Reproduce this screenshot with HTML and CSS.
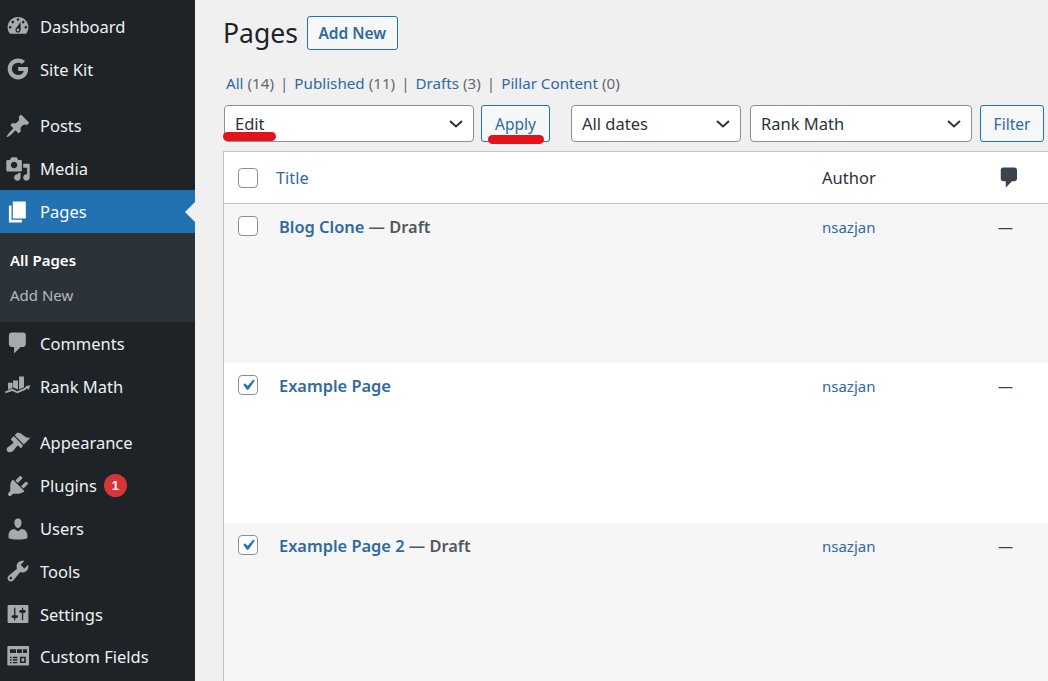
FILE: index.html
```html
<!DOCTYPE html>
<html lang="en">
<head>
  <meta charset="UTF-8">
  <title>Pages</title>
  <link rel="stylesheet" href="styles.css">
</head>
<body>
  <div class="admin">
    <nav class="sidebar">
      <ul class="menu">
        <li class="menu-item"><svg class="icon" viewBox="0 0 20 20"><path d="M3.76 16h12.48c1.1-1.37 1.76-3.11 1.76-5 0-4.42-3.58-8-8-8s-8 3.58-8 8c0 1.89.66 3.63 1.76 5zM10 4c.55 0 1 .45 1 1s-.45 1-1 1-1-.45-1-1 .45-1 1-1zM6 6c.55 0 1 .45 1 1s-.45 1-1 1-1-.45-1-1 .45-1 1-1zm8 0c.55 0 1 .45 1 1s-.45 1-1 1-1-.45-1-1 .45-1 1-1zm-5.37 5.55L12 7v6c0 1.1-.9 2-2 2s-2-.9-2-2c0-.57.24-1.08.63-1.45zM4 10c.55 0 1 .45 1 1s-.45 1-1 1-1-.45-1-1 .45-1 1-1zm12 0c.55 0 1 .45 1 1s-.45 1-1 1-1-.45-1-1 .45-1 1-1zm-5 3c0-.55-.45-1-1-1s-1 .45-1 1 .45 1 1 1 1-.45 1-1z"/></svg>Dashboard</li>
        <li class="menu-item"><svg class="icon" viewBox="0 0 20 20"><path d="M17.6 8.5h-7.5v3.1h4.300c-.4 2-2.100 3.100-4.300 3.100-2.600 0-4.800-2.200-4.800-4.800s2.200-4.800 4.800-4.800c1.200 0 2.200.4 3 1.100l2.300-2.300C14 2.700 12.200 2 10.100 2 5.700 2 2.100 5.600 2.100 10s3.600 8 8 8c4 0 7.700-2.900 7.700-8 0-.5-.1-1-.2-1.500z"/></svg>Site Kit</li>
        <li class="menu-sep"></li>
        <li class="menu-item"><svg class="icon" viewBox="0 0 20 20"><path d="M10.44 3.02l1.82-1.82 6.36 6.35-1.83 1.82c-1.05-.68-2.48-.57-3.41.36l-.75.75c-.92.93-1.04 2.35-.35 3.41l-1.83 1.82-2.41-2.41-2.8 2.79c-.42.42-3.38 2.71-3.8 2.29s1.86-3.39 2.28-3.81l2.79-2.79L4.1 9.36l1.83-1.82c1.05.69 2.48.57 3.4-.36l.75-.75c.93-.92 1.05-2.35.36-3.41z"/></svg>Posts</li>
        <li class="menu-item"><svg class="icon" viewBox="0 0 20 20"><path d="M13 11V4c0-.55-.45-1-1-1h-1.67L9 1H5L3.67 3H2c-.55 0-1 .45-1 1v7c0 .55.45 1 1 1h10c.55 0 1-.45 1-1zM7 4.500c1.380 0 2.500 1.120 2.500 2.500S8.380 9.500 7 9.500 4.500 8.380 4.500 7 5.620 4.500 7 4.500zM14 6h5v10.500c0 1.380-1.120 2.500-2.500 2.500S14 17.880 14 16.500s1.120-2.500 2.500-2.500c.17 0 .34.02.5.05V9h-3V6zm-4 8.050V13h2v3.500c0 1.380-1.120 2.500-2.500 2.500S7 17.880 7 16.500 8.120 14 9.500 14c.17 0 .34.02.5.05z"/></svg>Media</li>
        <li class="menu-item current"><svg class="icon" viewBox="0 0 20 20"><path d="M6 15V2h10v13H6zm-1 1h8v2H3V5h2v11z"/></svg>Pages</li>
        <li class="submenu">
          <div class="submenu-item active">All Pages</div>
          <div class="submenu-item">Add New</div>
        </li>
        <li class="menu-item"><svg class="icon" viewBox="0 0 20 20"><path d="M5 2h9c1.100 0 2 .9 2 2v7c0 1.100-.9 2-2 2h-2l-5 5v-5H5c-1.100 0-2-.9-2-2V4c0-1.100.9-2 2-2z"/></svg>Comments</li>
        <li class="menu-item"><svg class="icon" viewBox="0 0 20 20"><path d="M2.300 7.500h3.500v4l-3.500 1.300zM6.200 5.800H10v6.900l-3.800-1.600zM10.800 2.700h3.800v8.200l-3.800 1.700zM0 14.300l5.500-2.100 4 1.800 5.500-2.500 1.500-1.500 3-.5-1.500 3.500-1-1.200-1.500 1.200-6 2.600-4-1.800-5 1.700z"/></svg>Rank Math</li>
        <li class="menu-sep"></li>
        <li class="menu-item"><svg class="icon" viewBox="0 0 20 20"><path d="M14.480 11.060L7.410 3.990l1.500-1.500c.5-.56 2.300-.47 3.510.32 1.210.8 1.430 1.280 2.910 2.100 1.180.64 2.450 1.260 4.450.85zm-.71.71L6.700 4.700 4.930 6.470c-.39.39-.39 1.020 0 1.410l1.060 1.060c.39.39.39 1.030 0 1.420-.6.6-1.430 1.110-2.210 1.690-.35.26-.7.53-1.010.84C1.430 13.230.78 15.370 1.950 16.540c1.170 1.170 3.300.52 4.660-.84.31-.31.58-.66.84-1.010.58-.78 1.090-1.610 1.690-2.210.39-.39 1.020-.39 1.410 0l1.060 1.060c.39.39 1.020.39 1.410 0z"/></svg>Appearance</li>
        <li class="menu-item"><svg class="icon" viewBox="0 0 20 20"><path d="M13.110 4.360L9.870 7.600 8 5.730l3.240-3.240c.35-.34 1.050-.2 1.560.32.52.51.66 1.210.31 1.550zm-8 1.770l.91-1.120 9.010 9.010-1.190.84c-.71.71-2.630 1.160-3.820 1.160H6.140L4.900 17.260c-.59.59-1.540.59-2.120 0-.59-.58-.59-1.530 0-2.120l1.240-1.240v-3.880c0-1.130.4-3.190 1.090-3.890zm7.260 3.970l3.240-3.240c.34-.35 1.040-.21 1.550.31.52.51.66 1.210.31 1.550l-3.240 3.250z"/></svg>Plugins<span class="badge">1</span></li>
        <li class="menu-item"><svg class="icon" viewBox="0 0 20 20"><path d="M10 9.250c-2.270 0-2.730-3.440-2.730-3.440C7 4.020 7.820 2 9.970 2c2.160 0 2.980 2.020 2.710 3.810 0 0-.41 3.440-2.680 3.440zm0 2.570L12.720 10c2.390 0 4.520 2.330 4.520 4.530v2.490s-3.650 1.130-7.240 1.130c-3.650 0-7.240-1.130-7.240-1.130v-2.490c0-2.250 1.940-4.480 4.470-4.480z"/></svg>Users</li>
        <li class="menu-item"><svg class="icon" viewBox="0 0 20 20"><path d="M16.680 9.770c-1.340 1.340-3.300 1.670-4.950.99l-5.410 6.520c-.99.99-2.590.99-3.580 0s-.99-2.590 0-3.570l6.520-5.420c-.68-1.650-.35-3.610.99-4.950 1.280-1.280 3.120-1.620 4.720-1.060l-2.890 2.890 2.820 2.820 2.860-2.870c.53 1.580.18 3.390-1.080 4.650zM3.810 16.210c.4.39 1.040.39 1.430 0 .4-.4.4-1.040 0-1.430-.39-.4-1.030-.4-1.430 0-.39.39-.39 1.030 0 1.430z"/></svg>Tools</li>
        <li class="menu-item"><svg class="icon" viewBox="0 0 20 20"><path d="M18 16V4c0-.55-.45-1-1-1H3c-.55 0-1 .45-1 1v12c0 .55.45 1 1 1h14c.55 0 1-.45 1-1zM8 11h1c.55 0 1 .45 1 1s-.45 1-1 1H8v1.500c0 .28-.22.5-.5.5s-.5-.22-.5-.5V13H6c-.55 0-1-.45-1-1s.45-1 1-1h1V5.500c0-.28.22-.5.5-.5s.5.22.5.5V11zm5-2h-1c-.55 0-1-.45-1-1s.45-1 1-1h1V5.500c0-.28.22-.5.5-.5s.5.22.5.5V7h1c.55 0 1 .45 1 1s-.45 1-1 1h-1v5.500c0 .28-.22.5-.5.5s-.5-.22-.5-.5V9z"/></svg>Settings</li>
        <li class="menu-item"><svg class="icon" viewBox="0 0 20 20"><path fill-rule="evenodd" d="M2.500 1.500h15.300a.7.7 0 0 1 .7.7v13.600a.7.7 0 0 1-.7.7H2.500a.7.7 0 0 1-.7-.7V2.200a.7.7 0 0 1 .7-.7zM3.800 4v3h4.700V4zm5.400 0v3H13V4zm4.600 0v3h3.100V4zM3.800 9.800v1.100H5V9.800zm2.200 0v1.100h3.500V9.800zm5.500 0v4.800H16V9.800zM3.800 11.800v1.100H5v-1.100zm2.200 0v1.100h3.500v-1.100zm-2.200 2v1.100H5v-1.100zm2.200 0v1.100h3.500v-1.100zm6.700-2.800h2.100v2.400h-2.100z"/></svg>Custom Fields</li>
      </ul>
    </nav>

    <main class="content">
      <div class="heading">
        <h1>Pages</h1>
        <a class="btn add-new">Add New</a>
      </div>

      <ul class="views">
        <li><a>All</a> (14)</li>
        <li class="pipe">|</li>
        <li><a>Published</a> (11)</li>
        <li class="pipe">|</li>
        <li><a>Drafts</a> (3)</li>
        <li class="pipe">|</li>
        <li><a>Pillar Content</a> (0)</li>
      </ul>

      <div class="toolbar">
        <div class="select select-action">Edit
          <svg class="chevron" viewBox="0 0 14 8"><path d="M1 1l6 5.500L13 1"/></svg>
          <span class="mark mark-edit"></span>
        </div>
        <div class="btn apply">Apply<span class="mark mark-apply"></span></div>
        <div class="select select-dates">All dates
          <svg class="chevron" viewBox="0 0 14 8"><path d="M1 1l6 5.500L13 1"/></svg>
        </div>
        <div class="select select-seo">Rank Math
          <svg class="chevron" viewBox="0 0 14 8"><path d="M1 1l6 5.500L13 1"/></svg>
        </div>
        <div class="btn filter">Filter</div>
      </div>

      <div class="table">
        <div class="row head">
          <span class="check"></span>
          <a class="col-title head-title">Title</a>
          <span class="col-author">Author</span>
          <span class="col-comments"><svg class="comment-icon" viewBox="0 0 20 20"><path d="M5 2h9c1.100 0 2 .9 2 2v7c0 1.100-.9 2-2 2h-2l-5 5v-5H5c-1.100 0-2-.9-2-2V4c0-1.100.9-2 2-2z"/></svg></span>
        </div>
        <div class="row page-row alt">
          <span class="check"></span>
          <div class="col-title"><a>Blog Clone</a> — Draft</div>
          <a class="col-author">nsazjan</a>
          <span class="col-comments">—</span>
        </div>
        <div class="row page-row">
          <span class="check checked"><svg viewBox="0 0 20 20"><path d="M14.830 4.890l1.340.94-5.810 8.380H9.020L5.780 9.670l1.340-1.250 2.570 2.400z"/></svg></span>
          <div class="col-title"><a>Example Page</a></div>
          <a class="col-author">nsazjan</a>
          <span class="col-comments">—</span>
        </div>
        <div class="row page-row alt">
          <span class="check checked"><svg viewBox="0 0 20 20"><path d="M14.830 4.890l1.340.94-5.810 8.380H9.020L5.780 9.670l1.340-1.250 2.570 2.400z"/></svg></span>
          <div class="col-title"><a>Example Page 2</a> — Draft</div>
          <a class="col-author">nsazjan</a>
          <span class="col-comments">—</span>
        </div>
      </div>
    </main>
  </div>
</body>
</html>
```

FILE: styles.css
```css
* {
  box-sizing: border-box;
}

html, body {
  margin: 0;
  height: 681px;
  overflow: hidden;
}

body {
  font-family: "Noto Sans", "Open Sans", sans-serif;
  background-color: #f0f0f1;
  color: #3c434a;
}

ul {
  list-style: none;
  margin: 0;
  padding: 0;
}

a {
  color: #2f6a9f;
}

.admin {
  display: flex;
  height: 681px;
}

/* sidebar */
.sidebar {
  width: 195px;
  flex-shrink: 0;
  background-color: #1d2327;
  padding-top: 5px;
  color: #f0f0f1;
}

.menu-item {
  position: relative;
  display: flex;
  align-items: center;
  height: 42.800px;
  padding-left: 5px;
  font-size: 16.500px;
}

.menu-sep {
  height: 14px;
}

.icon {
  width: 26px;
  height: 26px;
  margin-right: 9px;
  fill: #a7aaad;
  flex-shrink: 0;
}

.current {
  background-color: #2271b1;
  color: #fff;
}

.current .icon {
  fill: #fff;
}

.current::after {
  content: "";
  position: absolute;
  right: 0;
  top: 12px;
  border: 10px solid transparent;
  border-right-color: #f0f0f1;
  border-left-width: 0;
}

.submenu {
  height: 89px;
  padding-top: 10px;
  background-color: #2c3338;
}

.submenu-item {
  height: 35px;
  line-height: 35px;
  padding-left: 10px;
  font-size: 15px;
  color: #b4b9be;
}

.submenu-item.active {
  color: #fff;
  font-weight: 600;
}

.badge {
  width: 23px;
  height: 23px;
  margin-left: 7px;
  border-radius: 50%;
  background-color: #d63638;
  color: #fff;
  font-family: "Liberation Sans", sans-serif;
  font-size: 13px;
  font-weight: 700;
  line-height: 23px;
  text-align: center;
}

/* main column */
.content {
  flex: 1;
  min-width: 0;
  padding: 16px 0 0 29px;
}

.heading {
  display: flex;
  align-items: center;
  height: 34px;
}

h1 {
  margin: 0 9px 0 -1px;
  font-size: 26.500px;
  font-weight: 400;
  color: #1d2327;
}

.btn {
  position: relative;
  display: flex;
  align-items: center;
  justify-content: center;
  border: 1px solid #2271b1;
  border-radius: 3px;
  background-color: #f6f7f7;
  color: #2f6a9f;
}

.add-new {
  width: 91px;
  height: 34px;
  font-size: 15.500px;
  font-weight: 600;
}

.views {
  display: flex;
  gap: 6px;
  height: 22px;
  margin-top: 22px;
  padding-left: 2px;
  font-size: 15.200px;
  line-height: 22px;
  color: #646970;
}

.toolbar {
  display: flex;
  height: 37px;
  margin-top: 11px;
}

.select {
  position: relative;
  display: flex;
  align-items: center;
  justify-content: space-between;
  height: 37px;
  padding: 0 10px 0 10px;
  border: 1px solid #8c8f94;
  border-radius: 4px;
  background-color: #fff;
  font-size: 16.500px;
  color: #2c3338;
}

.chevron {
  width: 14px;
  height: 8px;
  fill: none;
  stroke: #2c3338;
  stroke-width: 2;
}

.select-action {
  width: 250px;
}

.apply {
  width: 69px;
  margin-left: 7px;
  font-size: 15.500px;
}

.select-dates {
  width: 170px;
  margin-left: 21px;
}

.select-seo {
  width: 222px;
  margin-left: 9px;
}

.filter {
  width: 64px;
  margin-left: 8px;
  font-size: 15.500px;
}

/* red underlines drawn over the screenshot */
.mark {
  position: absolute;
  height: 9px;
  border-radius: 5px;
  background-color: #e3121b;
}

.mark-edit {
  left: -2px;
  top: 26px;
  width: 53px;
}

.mark-apply {
  left: 6px;
  top: 29px;
  width: 56px;
}

/* table */
.table {
  width: 841px;
  height: 540px;
  margin-top: 9px;
  margin-left: -1px;
  border: 1px solid #c3c4c7;
  border-right: none;
  background-color: #fff;
}

.row {
  display: flex;
  padding-left: 14px;
  background-color: #fff;
}

.head {
  align-items: center;
  height: 52px;
  border-bottom: 1px solid #c3c4c7;
}

.page-row {
  height: 159.300px;
  padding-top: 12px;
}

.alt {
  background-color: #f6f6f7;
}

.check {
  display: block;
  width: 20px;
  height: 20px;
  border: 1px solid #8c8f94;
  border-radius: 4px;
  background-color: #fff;
  flex-shrink: 0;
}

.check svg {
  display: block;
  width: 22px;
  height: 22px;
  margin: -2px;
  fill: #2271b1;
}

.col-title {
  width: 543px;
  margin-left: 21px;
  font-size: 16.400px;
  font-weight: 600;
  line-height: 22px;
  color: #50575e;
  flex-shrink: 0;
}

.col-title a {
  color: #2f6a9f;
}

.head-title {
  margin-left: 18px;
  width: 546px;
  font-weight: 400;
  color: #2f6a9f;
}

.col-author {
  width: 160px;
  font-size: 15px;
  line-height: 22px;
}

.head .col-author {
  color: #2c3338;
  font-size: 16.500px;
}

.col-comments {
  font-size: 15px;
  line-height: 22px;
  margin-left: 16px;
}

.comment-icon {
  display: block;
  width: 25px;
  height: 25px;
  margin-left: -1px;
  fill: #3c434a;
}
```
